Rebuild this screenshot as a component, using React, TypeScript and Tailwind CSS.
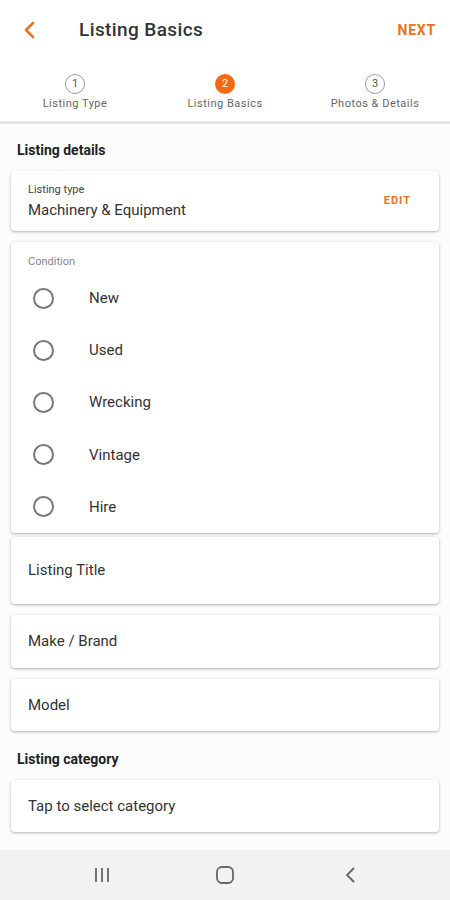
import React from "react";

const orange = "text-[#e8731a]";

const Step = ({ n, label, active }: { n: number; label: string; active?: boolean }) => (
  <div className="flex flex-col items-center w-[150px]">
    <div
      className={
        active
          ? "w-[20px] h-[20px] rounded-full bg-[#f26a10] text-white text-[11px] flex items-center justify-center"
          : "w-[20px] h-[20px] rounded-full border border-[#9a9a9a] text-[#555] text-[11px] flex items-center justify-center"
      }
    >
      {n}
    </div>
    <div className="text-[11px] text-[#666] mt-[2px] tracking-[0.5px]">{label}</div>
  </div>
);

const Radio = ({ label }: { label: string }) => (
  <div className="h-[53px] flex items-center">
    <div className="w-[21px] h-[21px] rounded-full border-2 border-[#777] ml-[22px]" />
    <span className="ml-[35px] text-[15px] text-[#333]">{label}</span>
  </div>
);

const Field = ({ label, h }: { label: string; h: string }) => (
  <div className={`bg-white rounded-[4px] shadow-[0_1px_3px_rgba(0,0,0,0.3)] flex items-center px-[17px] ${h}`}>
    <span className="text-[15px] text-[#333]">{label}</span>
  </div>
);

export default function App() {
  return (
    <div className="w-[450px] h-[900px] bg-white flex flex-col overflow-hidden" style={{ fontFamily: "Roboto, 'Noto Sans', sans-serif" }}>
      {/* header */}
      <div className="h-[60px] flex items-center px-[22px]">
        <svg width="16" height="18" viewBox="0 0 16 18" className="shrink-0">
          <path d="M11 2 L4 9 L11 16" fill="none" stroke="#e8731a" strokeWidth="2.6" strokeLinecap="round" strokeLinejoin="round" />
        </svg>
        <span className="ml-[41px] text-[19px] text-[#333] font-medium tracking-[0.4px]">Listing Basics</span>
        <span className={`ml-auto mr-[-8px] text-[14px] font-bold tracking-[0.8px] ${orange}`}>NEXT</span>
      </div>

      {/* stepper */}
      <div className="h-[64px] flex justify-between items-start pt-[14px] border-b-[3px] border-[#e4e4e4]">
        <Step n={1} label="Listing Type" />
        <Step n={2} label="Listing Basics" active />
        <Step n={3} label="Photos & Details" />
      </div>

      <div className="flex-1 px-[11px] flex flex-col bg-[#fcfcfc]">
        <div className="text-[14px] font-bold text-[#222] pl-[6px] pt-[16px] pb-[10px]">Listing details</div>

        <div className="bg-white rounded-[4px] shadow-[0_1px_3px_rgba(0,0,0,0.3)] h-[60px] flex items-center px-[17px]">
          <div className="flex flex-col">
            <span className="text-[11px] text-[#444] leading-[14px]">Listing type</span>
            <span className="text-[15px] text-[#333] leading-[20px] mt-[3px]">Machinery &amp; Equipment</span>
          </div>
          <span className={`ml-auto mr-[11px] text-[11px] font-bold tracking-[1px] ${orange}`}>EDIT</span>
        </div>

        <div className="bg-white rounded-[4px] shadow-[0_1px_3px_rgba(0,0,0,0.3)] mt-[11px] h-[291px] flex flex-col pt-[12px]">
          <div className="text-[11px] text-[#888] pl-[17px] mb-[2px]">Condition</div>
          <Radio label="New" />
          <Radio label="Used" />
          <Radio label="Wrecking" />
          <Radio label="Vintage" />
          <Radio label="Hire" />
        </div>

        <div className="flex flex-col gap-[11px] mt-[4px]">
          <Field label="Listing Title" h="h-[67px]" />
          <Field label="Make / Brand" h="h-[53px]" />
          <Field label="Model" h="h-[52px]" />
        </div>

        <div className="text-[14px] font-bold text-[#222] pl-[6px] pt-[18px] pb-[10px]">Listing category</div>
        <Field label="Tap to select category" h="h-[52px]" />
      </div>

      {/* system nav */}
      <div className="h-[50px] bg-[#f2f2f2] flex items-center justify-around px-[40px] shrink-0">
        <svg width="20" height="18" viewBox="0 0 20 18">
          <path d="M4 2v14M10 2v14M16 2v14" stroke="#666" strokeWidth="1.8" />
        </svg>
        <svg width="20" height="20" viewBox="0 0 20 20">
          <rect x="2" y="2" width="16" height="16" rx="5" fill="none" stroke="#666" strokeWidth="1.8" />
        </svg>
        <svg width="14" height="20" viewBox="0 0 14 20" className="ml-[6px]">
          <path d="M10 3 L3 10 L10 17" fill="none" stroke="#666" strokeWidth="1.8" />
        </svg>
      </div>
    </div>
  );
}
